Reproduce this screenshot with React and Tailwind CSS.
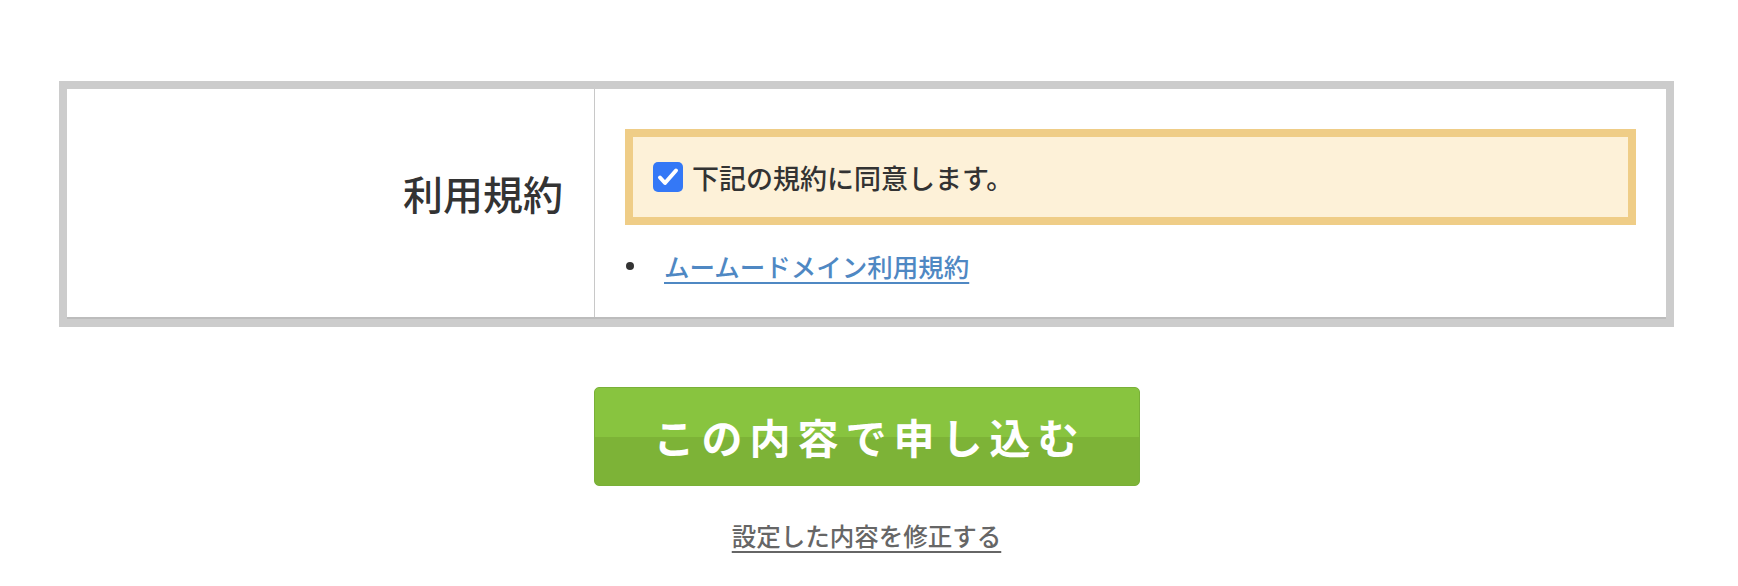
const Check = () => (
  <span className="flex h-[30px] w-[30px] shrink-0 items-center justify-center rounded-[5px] bg-[#3478f6]">
    <svg width="22" height="20" viewBox="0 0 22 20" fill="none">
      <path d="M3 10.5l5 5.5L19 3.5" stroke="#fff" strokeWidth="4" strokeLinecap="round" strokeLinejoin="round" />
    </svg>
  </span>
);

const App = () => {
  return (
    <div className="min-h-[586px] bg-white pt-[81px] font-['Noto_Sans_CJK_JP',sans-serif] text-[#333]">
      <div className="ml-[59px] flex w-[1615px] flex-col items-center">
        {/* 規約テーブル */}
        <div className="w-full border-8 border-[#cccccc] bg-white">
          <div className="flex border-b-2 border-[#bcbcbc]">
            <div className="w-[528px] shrink-0 border-r border-[#c8c8c8] pr-[31px] pt-[74px] text-right text-[40px] font-medium leading-[60px]">
              利用規約
            </div>
            <div className="flex-1 px-[30px] pb-[32px] pt-[40px]">
              <label className="flex h-[96px] items-center gap-[9px] border-8 border-[#efcd87] bg-[#fdf1d8] px-[20px] text-[27px] font-medium leading-[39px]">
                <Check />
                <span>下記の規約に同意します。</span>
              </label>
              <ul className="mt-[21px] flex items-center">
                <li className="flex items-center text-[25.5px] font-medium leading-[39px]">
                  <span className="ml-[1px] mr-[30px] h-[8px] w-[8px] rounded-full bg-[#333]" />
                  <a href="#" className="text-[#4f88c3] underline decoration-[2px] underline-offset-[5px]">
                    ムームードメイン利用規約
                  </a>
                </li>
              </ul>
            </div>
          </div>
        </div>

        <button className="mt-[60px] flex h-[99px] w-[546px] items-center justify-center rounded-[5px] border border-[#79b038] bg-[linear-gradient(#88c43f_50%,#7db337_50%)] pl-[6px] text-[41px] font-bold leading-none tracking-[7px] text-white">
          この内容で申し込む
        </button>

        <a href="#" className="mt-[31px] text-[24.5px] font-medium leading-[37px] text-[#666] underline decoration-[2px] underline-offset-[5px]">
          設定した内容を修正する
        </a>
      </div>
    </div>
  );
};

export default App;
